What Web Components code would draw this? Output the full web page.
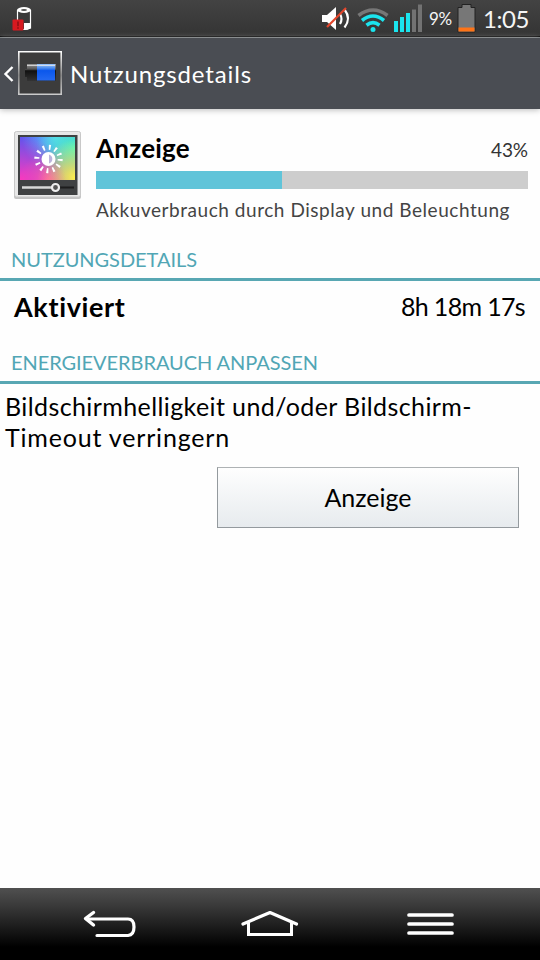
<!DOCTYPE html>
<html lang="de">
<head>
<meta charset="utf-8">
<title>Nutzungsdetails</title>
<style>
html,body{margin:0;height:100%;overflow:hidden}
body{background:#fefefe;font-family:Lato,"Open Sans",sans-serif;color:#000}
</style>
</head>
<body>
<usage-screen></usage-screen>
<script>
const define = (name, html, setup) => {
  customElements.define(name, class extends HTMLElement {
    constructor() {
      super();
      this.attachShadow({mode: 'open'}).innerHTML = html;
    }
    connectedCallback() { if (setup) setup(this); }
  });
};

/* One line of text, tracked so that it spans the width given in pixels. */
define('fit-text', `<style>
:host{display:block;white-space:nowrap;flex:none}
span{display:inline-block}
</style><span></span>`, el => {
  const span = el.shadowRoot.querySelector('span');
  span.textContent = el.getAttribute('text');
  el.style.width = el.getAttribute('w') + 'px';
  el.style.fontSize = el.getAttribute('size') + 'px';
  el.style.lineHeight = el.getAttribute('line') + 'px';
  const natural = span.getBoundingClientRect().width;
  span.style.letterSpacing = (el.getAttribute('w') - natural) / span.textContent.length + 'px';
});

define('status-bar', `<style>
:host{display:flex;height:38px;box-sizing:border-box;background:linear-gradient(#434343,#343434 36px,#000 36px,#000 37px,#73787b 37px);color:#f5f5f5}
svg{display:block;width:480px;height:36px;flex:none}
.t{margin-top:4px;margin-left:4px}
.p{margin:7px 0 0 -51px}
.p + .t{margin-left:31px}
</style>
<svg viewBox="0 0 480 36">
 <path d="M17.500 10v18q6.500 3 13 0V10" fill="#3a3a3a" stroke="#fff" stroke-width="1.200"/>
 <path d="M24 23h7v5q-3 2-7 2z" fill="#fff"/>
 <ellipse cx="24" cy="10" rx="7" ry="3" fill="#fff"/><ellipse cx="24" cy="10" rx="3" ry="1.100" fill="#555"/>
 <rect x="12.500" y="19.500" width="11" height="11" rx="1" fill="#d71920"/><path d="M18 21.500v4.700M18 27.300v1.500" stroke="#8f1014" stroke-width="1.600"/>
 <path d="M322 15h5l9-8v23l-9-8h-5z" fill="#fff"/>
 <path d="M340 14q3 5 0 10M344.500 9.500q7 9 0 18" fill="none" stroke="#fff" stroke-width="2.200"/>
 <path d="M327 27L346 8" stroke="#e3452b" stroke-width="2.200"/>
 <g fill="none" stroke-width="3.600"><path d="M358.500 15.500q14.500-11 29 0" stroke="#777"/><path d="M362 20.500q11-9 22 0M366.500 25.200q6.500-5 13 0" stroke="#1be4ee"/></g>
 <circle cx="373" cy="29.500" r="2.500" fill="#1be4ee"/>
 <path d="M394 21h4v11h-4zM400 17h4v15h-4zM406 13h4v19h-4z" fill="#1be4ee"/><path d="M412 9.500h4V32h-4zM418 4.500h4V32h-4z" fill="#727272"/>
 <path d="M458 7.500h4v-3h9v3h4V32h-17z" fill="#777" stroke="#222"/>
 <rect x="458.500" y="27.500" width="16" height="4" fill="#ff7417"/>
</svg>
<fit-text class="p" text="9%" w="23" size="17" line="24"></fit-text>
<fit-text class="t" text="1:05" w="46" size="24" line="30"></fit-text>`);

define('title-bar', `<style>
:host{display:flex;height:71px;background:#4a4d53;color:#fff;position:relative;z-index:1;box-shadow:0 1px 6px #bbb}
svg{width:62px;height:71px;flex:none}
fit-text{margin:19px 0 0 8px}
</style>
<svg viewBox="0 38 62 71">
 <defs><linearGradient id="f" x2="0" y2="1"><stop stop-color="#fff"/><stop offset=".55" stop-color="#888"/><stop offset="1" stop-color="#ccc"/></linearGradient>
 <linearGradient id="b" x2="0" y2="1"><stop stop-color="#9cc7fb"/><stop offset=".25" stop-color="#4a8bef"/><stop offset=".4" stop-color="#0b57ec"/><stop offset="1" stop-color="#2469f1"/></linearGradient>
 <linearGradient id="k" x2="0" y2="1"><stop stop-color="#999"/><stop offset=".3" stop-color="#555"/><stop offset=".4" stop-color="#111"/><stop offset="1" stop-color="#333"/></linearGradient></defs>
 <path d="M12.500 67L5.500 74l7 7" fill="none" stroke="#fff" stroke-width="2.400"/>
 <rect x="18.700" y="51.700" width="42.600" height="42.600" fill="#3c3c3c"/>
 <path d="M18 51h44v44H18zM19.600 52.600v40.800h40.800V52.600z" fill="url(#f)" fill-rule="evenodd"/>
 <path d="M27 64h29v17H27v-4h-2v-8h2z" fill="url(#k)"/>
 <rect x="37" y="64" width="18" height="16.500" fill="url(#b)"/><path d="M27 65.500h28" stroke="#eee" stroke-opacity=".7"/>
</svg>
<fit-text text="Nutzungsdetails" w="182" size="24" line="34"></fit-text>`);

define('display-icon', `<style>:host{display:block;width:96px;flex:none}svg{display:block}
.hue{width:55px;height:44px;background:radial-gradient(circle at 0 100%,#ff38bd,transparent 65%),radial-gradient(circle at 100% 92%,#fff04a,transparent 55%),radial-gradient(circle at 100% 25%,#48f5c2,transparent 60%),radial-gradient(circle at 65% 0,#58cfff,transparent 60%),radial-gradient(circle at 50% 100%,#ff7994,transparent 55%),#5a55ef}</style>
<svg width="96" height="96" viewBox="0 120 96 96">
 <rect x="14" y="132" width="67" height="67" rx="2" fill="#aaa" opacity=".7"/>
 <rect x="14.500" y="131.500" width="66" height="65.500" rx="2" fill="#e7e7e7" stroke="#c8c8c8"/>
 <rect x="18" y="135" width="59.500" height="60" fill="#3f4142"/>
 <foreignObject x="20" y="137" width="55" height="43"><div class="hue"></div></foreignObject>
 <circle cx="48.500" cy="159" r="11.700" fill="none" stroke="#fff" stroke-width="5" stroke-dasharray="1.900 4.226"/>
 <circle cx="48.500" cy="159" r="7" fill="#fff"/><path d="M49 154.500a4.700 4.700 0 0 1 0 9z" fill="#bbb3dc"/>
 <path d="M22 187.500h30" stroke="#d8d8d8" stroke-width="2.500"/><path d="M60 187.500h14" stroke="#1d1d1d" stroke-width="2"/>
 <circle cx="55.500" cy="187.500" r="3.500" fill="#555" stroke="#eee" stroke-width="2.200"/>
</svg>`);

define('usage-summary', `<style>
:host{display:flex;height:125px;padding-top:11px;box-sizing:border-box}
.body{width:432px}
.row{display:flex;justify-content:space-between;height:51px}
.name{font-weight:700;margin-top:10px}
.pct{margin:14px 0 0;color:#333}
.track{height:18px;background:#cdcdcd}
.fill{height:100%;width:186px;background:#60c4d9}
.desc{color:#444;margin-top:7px}
</style>
<display-icon></display-icon>
<div class="body"><div class="row"><fit-text class="name" text="Anzeige" w="94" size="26" line="36"></fit-text><fit-text class="pct" text="43%" w="37" size="19" line="32"></fit-text></div>
<div class="track"><div class="fill"></div></div>
<fit-text class="desc" text="Akkuverbrauch durch Display und Beleuchtung" w="414" size="19" line="28"></fit-text></div>`);

define('section-title', `<style>
:host{display:block;box-sizing:border-box;padding-left:11px;color:#51a6b5;border-bottom:3px solid #58a7b3}
</style><slot></slot>`);

define('detail-row', `<style>
:host{display:flex;justify-content:space-between;height:66px;box-sizing:border-box;padding:8px 15px 0 14px}
</style><slot></slot>`);

define('push-button', `<style>
:host{display:flex;justify-content:center;align-items:center;box-sizing:border-box;width:302px;height:61px;margin:14px 0 0 217px;padding-bottom:2px;border:1px solid #949a9e;border-top-color:#aeb2b4;background:linear-gradient(#fefefe,#e7ebee)}
</style><slot></slot>`);

define('nav-bar', `<style>
:host{display:flex;height:72px;margin-top:auto;background:linear-gradient(#505050,#393939 18px,#000 59px)}
svg{display:block}
</style><svg width="540" height="72" viewBox="0 888 540 72" fill="none" stroke="#fff" stroke-linecap="round" stroke-linejoin="round">
 <path d="M87 919h41q6 0 6 8t-6 8.500H97" stroke-width="3.200"/><path d="M93.500 912.500L85.500 918.500l8 6.500" stroke-width="3.400"/>
 <path d="M243 924l27-11.500L296.500 924" stroke-width="3.200"/><path d="M248.500 923v11.500h43V923" stroke-width="3" stroke-linejoin="miter"/>
 <path d="M409 915h43M409 924h43M409 933h43" stroke-width="3.700"/>
</svg>`);

define('usage-screen', `<style>
:host{display:flex;flex-direction:column;width:540px;height:960px}
.first{height:47px;padding-top:10px}
.second{height:37px}
.bold{font-weight:700}
.tip{padding:6px 0 0 5px}
</style>
<status-bar></status-bar><title-bar></title-bar><usage-summary></usage-summary>
<section-title class="first"><fit-text text="NUTZUNGSDETAILS" w="186" size="20" line="31"></fit-text></section-title>
<detail-row><fit-text class="bold" text="Aktiviert" w="112" size="27" line="36"></fit-text><fit-text text="8h 18m 17s" w="124" size="25" line="35"></fit-text></detail-row>
<section-title class="second"><fit-text text="ENERGIEVERBRAUCH ANPASSEN" w="307" size="20" line="30"></fit-text></section-title>
<div class="tip"><fit-text text="Bildschirmhelligkeit und/oder Bildschirm-" w="467" size="25" line="32"></fit-text><fit-text text="Timeout verringern" w="225" size="25" line="31"></fit-text></div>
<push-button><fit-text text="Anzeige" w="87" size="25" line="36"></fit-text></push-button>
<nav-bar></nav-bar>`);
</script>
</body>
</html>
